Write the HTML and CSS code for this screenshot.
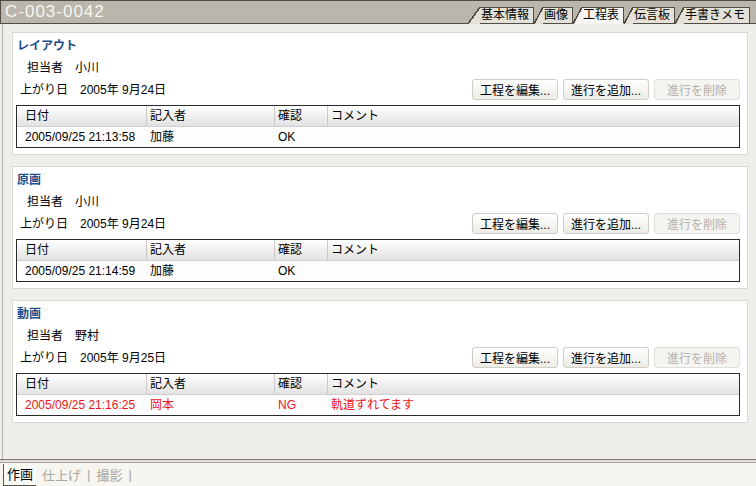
FILE: index.html
```html
<!DOCTYPE html>
<html lang="ja">
<head>
  <meta charset="UTF-8">
  <title>C-003-0042 工程表</title>
  <link rel="stylesheet" href="styles.css">
</head>
<body>
  <div class="window">
    <!-- タイトルバー -->
    <div class="titlebar">
      <span class="code">C-003-0042</span>
      <div class="tabs">
        <div class="tab first">基本情報</div>
        <div class="tab">画像</div>
        <div class="tab active">工程表</div>
        <div class="tab">伝言板</div>
        <div class="tab">手書きメモ</div>
      </div>
    </div>
    <!-- 工程リスト -->
    <div class="content" id="stepList"></div>
    <!-- 下のタブ -->
    <div class="bottombar">
      <div class="btab active">作画</div>
      <div class="btab">仕上げ</div>
      <span class="sep">|</span>
      <div class="btab">撮影</div>
      <span class="sep">|</span>
    </div>
  </div>
  <script>
    // 工程データ
    const steps = [
      {name:"レイアウト", staff:"小川", due:"2005年 9月24日",
       logs:[{date:"2005/09/25 21:13:58", who:"加藤", check:"OK", comment:""}]},
      {name:"原画", staff:"小川", due:"2005年 9月24日",
       logs:[{date:"2005/09/25 21:14:59", who:"加藤", check:"OK", comment:""}]},
      {name:"動画", staff:"野村", due:"2005年 9月25日",
       logs:[{date:"2005/09/25 21:16:25", who:"岡本", check:"NG", comment:"軌道ずれてます"}]}
    ];

    function cell(cls, text) {
      let c = document.createElement("div");
      c.className = "cell " + cls;
      c.textContent = text;
      return c;
    }

    function renderSteps() {
      const list = document.getElementById("stepList");
      list.innerHTML = "";
      steps.forEach(step => {
        let card = document.createElement("section");
        card.className = "card";
        card.innerHTML =
          '<div class="card-title"></div>' +
          '<div class="info-row staff"><span class="label">担当者</span><span class="value"></span></div>' +
          '<div class="info-row due-row">' +
            '<div class="due"><span class="label">上がり日</span><span class="value"></span></div>' +
            '<div class="buttons">' +
              '<button class="btn">工程を編集...</button>' +
              '<button class="btn">進行を追加...</button>' +
              '<button class="btn" disabled>進行を削除</button>' +
            '</div>' +
          '</div>';
        card.querySelector(".card-title").textContent = step.name;
        card.querySelector(".staff .value").textContent = step.staff;
        card.querySelector(".due .value").textContent = step.due;

        let table = document.createElement("div");
        table.className = "log-table";
        let head = document.createElement("div");
        head.className = "log-row head";
        head.appendChild(cell("c-date", "日付"));
        head.appendChild(cell("c-who", "記入者"));
        head.appendChild(cell("c-check", "確認"));
        head.appendChild(cell("c-comment", "コメント"));
        table.appendChild(head);

        step.logs.forEach(log => {
          let row = document.createElement("div");
          row.className = "log-row" + (log.check === "NG" ? " ng" : "");
          row.appendChild(cell("c-date", log.date));
          row.appendChild(cell("c-who", log.who));
          row.appendChild(cell("c-check", log.check));
          row.appendChild(cell("c-comment", log.comment));
          table.appendChild(row);
        });
        card.appendChild(table);
        list.appendChild(card);
      });
    }

    renderSteps();
  </script>
</body>
</html>
```

FILE: styles.css
```css
body {
  margin: 0;
  font-family: "Liberation Sans", "Noto Sans CJK JP", sans-serif;
  font-size: 12px;
  color: #000;
  background: #efeeea;
}
.window {
  display: flex;
  flex-direction: column;
  height: 100vh;
  overflow: hidden;
}
.titlebar {
  display: flex;
  align-items: flex-end;
  justify-content: space-between;
  height: 22px;
  background: #bab6ab;
  border: 1px solid #4f4d45;
  border-right: none;
  flex-shrink: 0;
}
.code {
  align-self: center;
  color: #f6f5f0;
  font-size: 17px;
  letter-spacing: 1px;
  padding-left: 4px;
  line-height: 20px;
}
.tabs {
  display: flex;
  align-items: flex-end;
  margin-right: 6px;
  margin-bottom: -1px;
}
.tab {
  position: relative;
  height: 15px;
  line-height: 15px;
  margin-left: 9px;
  padding: 0 4px 0 1px;
  background: #e4e1d8;
  border-top: 1px solid #4f4d45;
  border-right: 1px solid #4f4d45;
  border-bottom: 1px solid #4f4d45;
  font-size: 12px;
  white-space: nowrap;
}
.tab::before {
  content: "";
  position: absolute;
  left: -9px;
  top: -1px;
  bottom: -1px;
  width: 9px;
  background: linear-gradient(to bottom right, transparent calc(50% - 0.8px), #4f4d45 calc(50% - 0.8px), #4f4d45 calc(50% + 0.8px), #e4e1d8 calc(50% + 0.8px));
}
.tab.first { margin-left: 12px; }
.tab.first::before { left: -12px; width: 12px; }
.tab.active {
  background: #f6f5f1;
  border-bottom-color: #f6f5f1;
  z-index: 1;
}
.tab.active::before {
  background: linear-gradient(to bottom right, transparent calc(50% - 0.8px), #4f4d45 calc(50% - 0.8px), #4f4d45 calc(50% + 0.8px), #f6f5f1 calc(50% + 0.8px));
}
.content {
  flex: 1;
  margin-left: 2px;
  border-left: 1px solid #b3b0a6;
  padding: 8px 8px 0 9px;
  display: flex;
  flex-direction: column;
  gap: 11px;
}
.card {
  background: #fff;
  border: 1px solid #d9d8d3;
  padding: 6px 7px 6px 3px;
}
.card-title {
  color: #1a4f8b;
  font-weight: bold;
  font-size: 12px;
  line-height: 15px;
  padding-left: 1px;
}
.info-row {
  line-height: 16px;
  margin-top: 6px;
}
.staff { padding-left: 11px; }
.label { margin-right: 12px; }
.due-row {
  display: flex;
  align-items: center;
  justify-content: space-between;
  margin-top: 3px;
  padding-left: 4px;
}
.buttons {
  display: flex;
  gap: 5px;
}
.btn {
  width: 86px;
  height: 21px;
  padding: 0;
  font-family: inherit;
  font-size: 12px;
  color: #000;
  background: linear-gradient(#ffffff, #ecebe5);
  border: 1px solid #cfcdc4;
  border-radius: 3px;
}
.btn:disabled {
  color: #b4b2aa;
  background: #f5f4f1;
  border-color: #e0dfda;
}
.log-table {
  margin-top: 5px;
  border: 1px solid #2a2a2a;
}
.log-row {
  display: flex;
  height: 20px;
  line-height: 20px;
  background: #fdfdfd;
}
.log-row.head {
  background: linear-gradient(#ffffff, #e2e2e2);
  border-bottom: 1px solid #cfcfcf;
}
.log-row.ng { color: #e8161b; }
.cell {
  padding-left: 4px;
  white-space: nowrap;
}
.c-date { width: 121px; padding-left: 8px; }
.c-who { width: 124px; }
.c-check { width: 49px; }
.c-comment { flex: 1; }
.head .c-who,
.head .c-check,
.head .c-comment {
  border-left: 1px solid #c9c9c9;
  padding-left: 3px;
}
.head .c-who { width: 124px; }
.bottombar {
  flex-shrink: 0;
  height: 23px;
  display: flex;
  align-items: center;
  background: #f6f5f0;
  border-top: 1px solid #a8a59a;
  box-shadow: 0 -2px 0 #e2e0d8, 0 -3px 0 #7d7a70;
  padding-left: 3px;
  font-size: 13px;
  color: #aaa89f;
}
.btab { padding: 0 4px; }
.btab.active {
  color: #000;
  background: #fbfaf7;
  height: 21px;
  line-height: 21px;
  padding: 0 3px;
  margin-right: 2px;
  border-left: 1px solid #55534a;
  border-bottom: 1px solid #55534a;
}
.sep { padding: 0 2px; }
```
